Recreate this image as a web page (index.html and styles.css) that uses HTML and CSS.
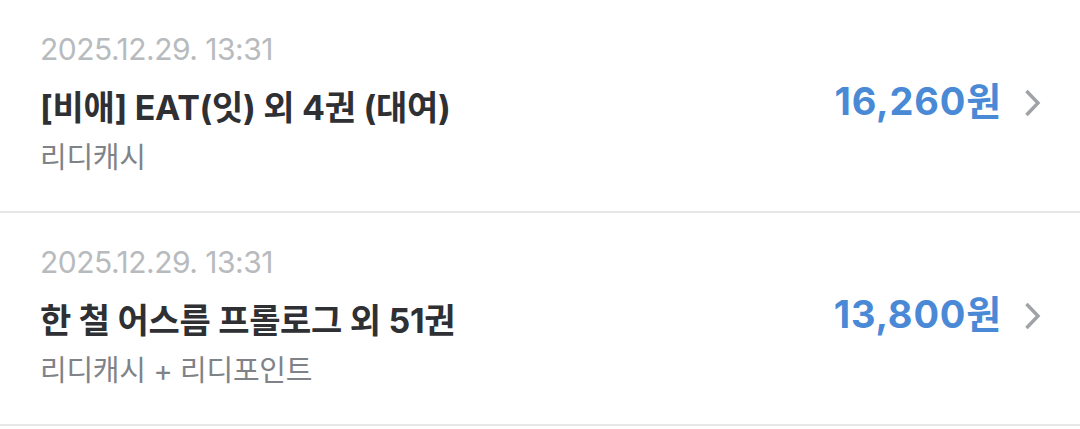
FILE: index.html
```html
<!DOCTYPE html>
<html lang="ko">
<head>
    <meta charset="UTF-8">
    <meta name="viewport" content="width=device-width, initial-scale=1.0">
    <title>결제 내역</title>
    <link rel="stylesheet" href="styles.css">
</head>
<body>
    <ul class="history">
        <li class="item">
            <div class="info">
                <div class="date">2025.12.29. 13:31</div>
                <div class="title">[비애] EAT(잇) 외 4권 (대여)</div>
                <div class="method">리디캐시</div>
            </div>
            <div class="price">16,260원</div>
            <svg class="chevron" viewBox="0 0 20 30"><path d="M4.5 3 L16 15 L4.5 27"/></svg>
        </li>
        <li class="item">
            <div class="info">
                <div class="date">2025.12.29. 13:31</div>
                <div class="title">한 철 어스름 프롤로그 외 51권</div>
                <div class="method">리디캐시 + 리디포인트</div>
            </div>
            <div class="price">13,800원</div>
            <svg class="chevron" viewBox="0 0 20 30"><path d="M4.5 3 L16 15 L4.5 27"/></svg>
        </li>
    </ul>
</body>
</html>
```

FILE: styles.css
```css
body {
    margin: 0;
    background: #fff;
    font-family: Inter, "Noto Sans CJK KR", sans-serif;
    color: #333;
}
.history {
    list-style: none;
    margin: 0;
    padding: 0;
}
.item {
    display: flex;
    align-items: center;
    padding: 32px 38px 35px 40px;
    border-bottom: 2px solid #e6e7e8;
}
.info {
    flex: 1;
    display: flex;
    flex-direction: column;
}
.date {
    font-size: 30px;
    color: #b8bbbe;
    letter-spacing: -0.5px;
    line-height: 34px;
}
.title {
    font-size: 34px;
    font-weight: 700;
    color: #2f3034;
    letter-spacing: -0.3px;
    line-height: 44px;
    margin-top: 20px;
}
.method {
    font-size: 29px;
    color: #7f8388;
    letter-spacing: -0.3px;
    line-height: 36px;
    margin-top: 10px;
}
.price {
    font-size: 38px;
    font-weight: 700;
    color: #4a89d6;
    letter-spacing: 0.8px;
    margin-bottom: 12px;
}
.chevron {
    width: 20px;
    height: 30px;
    margin-left: 20px;
    margin-bottom: 2px;
    fill: none;
    stroke: #9fa2a6;
    stroke-width: 3.4;
}
```
